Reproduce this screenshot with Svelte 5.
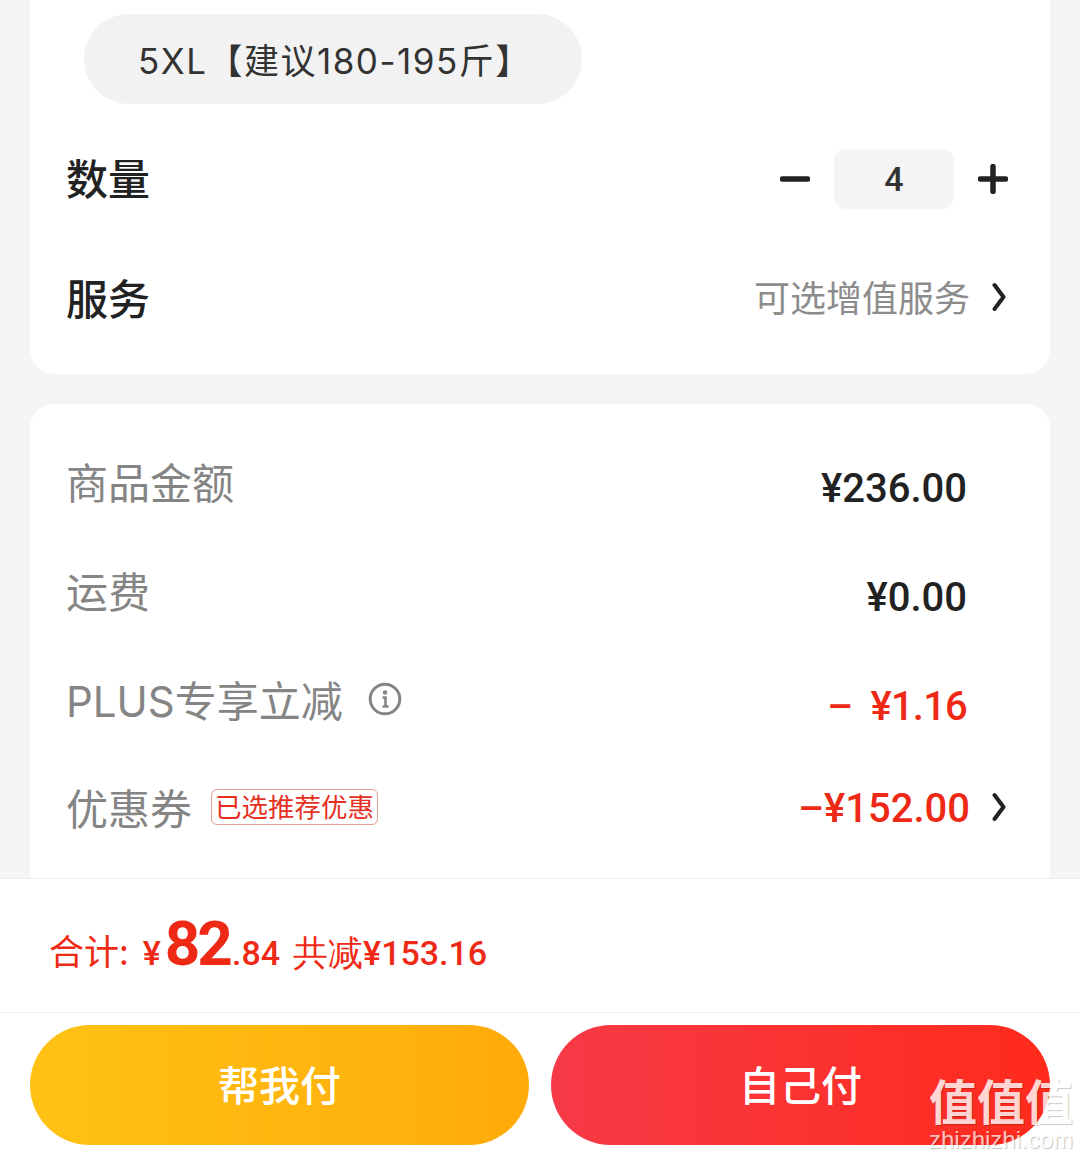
<script>
  let quantity = 4;

  const fees = [
    { label: "商品金额", value: "¥236.00" },
    { label: "运费", value: "¥0.00" }
  ];
</script>

<main class="page">
  <div class="scroll">
    <section class="card options">
      <div class="size-pill">5XL【建议180-195斤】</div>
      <div class="row quantity-row">
        <span class="title">数量</span>
        <div class="stepper">
          <svg width="30" height="30" viewBox="0 0 30 30"><path d="M2.5 15h25" stroke="#222" stroke-width="5.5" stroke-linecap="round" /></svg>
          <span class="count">{quantity}</span>
          <svg width="30" height="30" viewBox="0 0 30 30"><path d="M2.5 15h25M15 2.5v25" stroke="#222" stroke-width="5.5" stroke-linecap="round" /></svg>
        </div>
      </div>
      <div class="row service-row">
        <span class="title">服务</span>
        <div class="side">
          <span class="hint">可选增值服务</span>
          <svg class="chevron" width="14" height="30" viewBox="0 0 14 30"><path d="M2.5 3 11.5 15 2.5 27" fill="none" stroke="#222" stroke-width="4" stroke-linecap="round" stroke-linejoin="round" /></svg>
        </div>
      </div>
    </section>

    <section class="card prices">
      {#each fees as fee}
        <div class="price-row">
          <span class="label">{fee.label}</span>
          <span class="amount">{fee.value}</span>
        </div>
      {/each}
      <div class="price-row">
        <span class="label">PLUS专享立减
          <svg class="info" width="34" height="34" viewBox="0 0 34 34">
            <circle cx="17" cy="17" r="14.8" fill="none" stroke="#858585" stroke-width="3" />
            <circle cx="17" cy="10.5" r="2.2" fill="#858585" />
            <path d="M14.5 15.5H17.5V24M14.5 24.5h6" fill="none" stroke="#858585" stroke-width="2.6" />
          </svg>
        </span>
        <span class="amount red tight">–&nbsp;&nbsp;¥1.16</span>
      </div>
      <div class="price-row coupon">
        <span class="label">优惠券<span class="tag">已选推荐优惠</span></span>
        <div class="side">
          <span class="amount red">–¥152.00</span>
          <svg class="chevron" width="14" height="30" viewBox="0 0 14 30"><path d="M2.5 3 11.5 15 2.5 27" fill="none" stroke="#222" stroke-width="4" stroke-linecap="round" stroke-linejoin="round" /></svg>
        </div>
      </div>
    </section>
  </div>

  <footer class="footer">
    <div class="total">
      <span class="total-label">合计:</span>
      <span class="yen">¥</span><span class="big">82</span><span class="cents">.84</span>
      <span class="saved"><span class="total-label">共减</span>¥153.16</span>
    </div>
    <div class="buttons">
      <button class="pay friend">帮我付</button>
      <button class="pay self">自己付</button>
    </div>
  </footer>

  <div class="watermark">
    <div class="wm-logo">值值值</div>
    <div class="wm-url">zhizhizhi.com</div>
  </div>
</main>

<style>
  :global(body) {
    margin: 0;
    background: #f5f5f5;
  }

  .page {
    position: relative;
    width: 1080px;
    height: 1157px;
    overflow: hidden;
    display: flex;
    flex-direction: column;
    font-family: "Noto Sans CJK SC", "Noto Sans", sans-serif;
    color: #222;
  }

  .scroll {
    height: 878px;
    overflow: hidden;
    flex: none;
    padding: 0 30px;
    box-sizing: border-box;
    display: flex;
    flex-direction: column;
    gap: 30px;
  }

  .card {
    background: #fff;
    border-radius: 24px;
    flex: none;
  }

  .options {
    height: 374px;
    box-sizing: border-box;
    border-radius: 0 0 24px 24px;
    padding: 14px 42px 0 37px;
  }

  .size-pill {
    margin-left: 17px;
    width: 498px;
    height: 90px;
    box-sizing: border-box;
    padding-left: 54px;
    border-radius: 45px;
    background: #f2f2f2;
    font-family: "Inter", "Noto Sans CJK SC", sans-serif;
    font-size: 35px;
    letter-spacing: 1.5px;
    line-height: 94px;
    color: #333;
    white-space: nowrap;
  }

  .row {
    display: flex;
    align-items: center;
    justify-content: space-between;
  }

  .quantity-row {
    height: 60px;
    margin-top: 45px;
  }

  .service-row {
    height: 60px;
    margin-top: 60px;
  }

  .title {
    margin-left: -1px;
    padding-bottom: 4px;
    font-size: 42px;
    font-weight: 500;
    line-height: 60px;
  }

  .stepper {
    display: flex;
    align-items: center;
  }

  .count {
    width: 120px;
    height: 60px;
    margin: 0 24px;
    border-radius: 12px;
    background: #f5f5f5;
    font-family: "Roboto", sans-serif;
    font-size: 34px;
    font-weight: 500;
    line-height: 60px;
    text-align: center;
    color: #333;
  }

  .side {
    display: flex;
    align-items: center;
    gap: 22px;
  }

  .hint {
    padding-bottom: 6px;
    font-size: 36px;
    line-height: 60px;
    color: #8c8c8c;
  }

  .chevron {
    flex: none;
    margin-right: 2px;
    margin-bottom: 4px;
  }

  .prices {
    height: 600px;
    box-sizing: border-box;
    padding: 30px 42px 0 37px;
  }

  .price-row {
    height: 109px;
    display: flex;
    align-items: center;
    justify-content: space-between;
    padding-right: 41px;
  }

  .coupon {
    height: 95px;
    padding-right: 0;
  }

  .label {
    display: flex;
    align-items: center;
    margin-left: -1px;
    padding-bottom: 16px;
    font-family: "Inter", "Noto Sans CJK SC", sans-serif;
    font-size: 42px;
    color: #858585;
    white-space: nowrap;
  }

  .coupon .label {
    padding-bottom: 4px;
  }

  .info {
    margin-left: 25px;
  }

  .tag {
    margin-left: 19px;
    padding: 0 3px;
    height: 36px;
    line-height: 34px;
    box-sizing: border-box;
    border: 1px solid #e6a097;
    border-radius: 6px;
    font-size: 26.5px;
    color: #e5301f;
  }

  .amount {
    font-family: "Roboto", sans-serif;
    font-size: 40px;
    font-weight: 500;
    color: #222;
  }

  .red {
    color: #ee2a16;
  }

  .tight {
    letter-spacing: -0.8px;
  }

  .footer {
    flex: 1;
    background: #fff;
    border-top: 1px solid #eeeeee;
  }

  .total {
    height: 134px;
    box-sizing: border-box;
    padding: 28px 0 0 49px;
    display: flex;
    align-items: baseline;
    color: #ee2a16;
    border-bottom: 1px solid #f2f2f2;
    white-space: nowrap;
  }

  .total-label {
    font-size: 35px;
    font-weight: 400;
  }

  .yen {
    margin-left: 14px;
    font-family: "Roboto", sans-serif;
    font-size: 34px;
    font-weight: 500;
  }

  .big {
    font-family: "Roboto", sans-serif;
    font-size: 62px;
    font-weight: 700;
    letter-spacing: -3px;
    margin-left: 4px;
    margin-right: 2px;
  }

  .cents {
    font-family: "Roboto", sans-serif;
    font-size: 34px;
    font-weight: 500;
  }

  .saved {
    margin-left: 13px;
    font-family: "Roboto", sans-serif;
    font-size: 34px;
    font-weight: 500;
  }

  .buttons {
    display: flex;
    gap: 22px;
    padding: 12px 30px 0;
  }

  .pay {
    flex: 1;
    height: 120px;
    padding: 0 0 4px;
    border: none;
    border-radius: 60px;
    color: #fff;
    font-family: inherit;
    font-size: 41px;
    font-weight: 500;
  }

  .friend {
    background: linear-gradient(90deg, #ffc214, #ffab09);
  }

  .self {
    background: linear-gradient(90deg, #f63a47, #ff2b1c);
  }

  .watermark {
    position: absolute;
    right: 7px;
    bottom: 5px;
    width: 144px;
    text-align: center;
    color: #fff;
  }

  .wm-logo {
    font-size: 48px;
    font-weight: 700;
    line-height: 46px;
    margin-bottom: 6px;
    white-space: nowrap;
    opacity: 0.8;
    text-shadow: 1px 1px 1px rgba(0, 0, 0, 0.25);
  }

  .wm-url {
    font-family: "Liberation Sans", sans-serif;
    font-size: 24px;
    line-height: 24px;
    white-space: nowrap;
    opacity: 0.7;
    text-shadow: 1px 1px 1px rgba(0, 0, 0, 0.35);
  }
</style>
